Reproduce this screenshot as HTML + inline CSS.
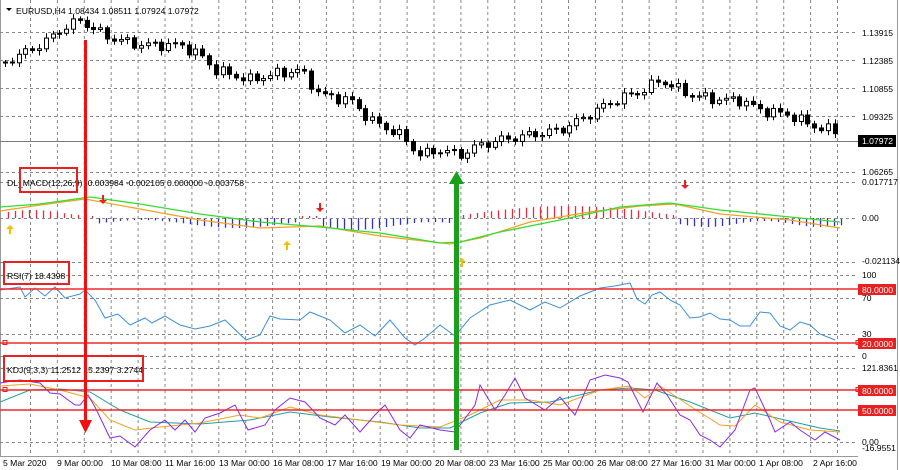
<!DOCTYPE html>
<html><head><meta charset="utf-8"><style>
html,body{margin:0;padding:0;background:#fff;width:900px;height:470px;overflow:hidden}
svg{display:block;font-family:"Liberation Sans",sans-serif}
text{font-size:8.6px;fill:#000}
</style></head><body>
<svg id="s" width="900" height="470" viewBox="0 0 900 470">
<rect width="900" height="470" fill="#fff"/>
<line x1="897.5" y1="0" x2="897.5" y2="470" stroke="#999"/>
<line x1="0.5" y1="0" x2="0.5" y2="456" stroke="#999"/>
<line x1="0" y1="456.5" x2="858" y2="456.5" stroke="#999"/>
<g id="grid" stroke="#888" stroke-dasharray="3,3" stroke-width="1"></g>
<line x1="0" y1="141.5" x2="858" y2="141.5" stroke="#778"/>
<g id="candles"></g>
<g id="hist"></g>
<line x1="0" y1="218.5" x2="858" y2="218.5" stroke="#888" stroke-dasharray="3,3"/>
<polyline fill="none" stroke="#f5a020" stroke-width="1.2" points="0,211 40,205 85,199 140,209 200,220 260,228 320,226 380,236 450,244 480,238 530,222 590,212 640,206 675,204 720,214 790,220 840,228"/>
<polyline fill="none" stroke="#33dd33" stroke-width="1.3" points="0,207 40,204 90,197 140,204 200,214 260,222 320,227 380,233 440,243 460,242 500,232 560,220 620,207 670,203 720,210 780,216 840,222"/>
<polyline fill="none" stroke="#3c8fd8" stroke-width="1" points="0,290 20,287 25,297 35,288 45,296 55,287 65,298 80,294 85,290 95,300 105,318 118,314 130,325 145,318 152,323 165,316 180,325 195,329 210,326 225,320 246,340 260,335 270,316 280,319 300,320 310,312 330,320 345,333 360,325 375,336 390,320 405,338 415,345 425,338 440,325 455,336 470,318 490,305 510,300 530,310 545,302 560,308 580,296 600,288 615,286 630,283 637,299 645,304 652,295 660,292 670,300 680,305 690,318 700,317 710,313 720,319 730,320 740,326 750,326 760,312 770,313 780,326 790,330 800,322 810,325 820,334 835,340"/>
<polyline fill="none" stroke="#20a0a0" stroke-width="1" points="0,402 30,390 60,389 90,392 120,410 150,422 200,424 250,420 290,412 330,417 380,422 420,428 450,428 480,413 510,403 550,402 600,390 630,388 655,390 690,402 730,418 755,413 785,420 820,428 840,431"/>
<polyline fill="none" stroke="#f5a020" stroke-width="1" points="0,386 30,384 60,390 90,398 110,420 135,430 160,427 200,423 240,415 260,418 290,407 320,415 360,420 400,425 440,427 470,415 500,400 530,400 560,405 600,390 630,386 645,398 660,386 690,406 720,425 735,426 755,405 780,422 810,430 840,432"/>
<polyline fill="none" stroke="#8a2be2" stroke-width="1" points="0,383 20,380 40,383 50,393 60,394 75,405 80,405 88,395 95,407 110,438 120,436 135,447 150,430 165,420 175,430 185,420 195,432 205,418 220,413 235,405 248,430 265,425 275,410 290,398 305,402 320,418 335,425 345,415 360,432 375,415 385,405 400,430 410,438 420,425 440,430 455,432 475,405 480,385 495,410 505,395 515,378 525,398 545,410 560,397 575,415 590,380 605,375 620,378 628,382 643,412 657,383 667,395 680,415 690,420 700,435 710,440 720,447 735,430 750,390 755,388 770,420 775,432 790,422 800,430 815,440 825,432 840,440"/>
<g stroke="#f02828" stroke-width="1.5">
<line x1="0" y1="289" x2="858" y2="289"/><line x1="0" y1="343" x2="858" y2="343"/>
<line x1="0" y1="390" x2="858" y2="390"/><line x1="0" y1="410" x2="858" y2="410"/>
</g>
<g fill="#e82020">
<rect x="858" y="284" width="38" height="11"/><rect x="858" y="338" width="38" height="11"/>
<rect x="858" y="385" width="38" height="11"/><rect x="858" y="405" width="38" height="11"/>
</g>
<g fill="none" stroke="#e82020"><rect x="3" y="340.5" width="4" height="4"/><rect x="3" y="387.5" width="4" height="4"/><rect x="856" y="340.5" width="4" height="4"/><rect x="856" y="387.5" width="4" height="4"/></g>
<g><text x="862" y="293" style="fill:#fff">80.0000</text><text x="862" y="347" style="fill:#fff">20.0000</text><text x="862" y="394" style="fill:#fff">80.0000</text><text x="862" y="414" style="fill:#fff">50.0000</text></g>
<rect x="858" y="135" width="38" height="12" fill="#000"/>
<text x="862" y="144" style="fill:#fff">1.07972</text>
<text x="862" y="36">1.13915</text><text x="862" y="64">1.12385</text><text x="862" y="92">1.10855</text><text x="862" y="120">1.09325</text><text x="862" y="175">1.06265</text>
<text x="862" y="185">0.017717</text><text x="862" y="221">0.00</text><text x="862" y="264">-0.021134</text>
<text x="862" y="278">100</text><text x="862" y="301">70</text><text x="862" y="337">30</text><text x="862" y="359">0</text>
<text x="862" y="371">121.8361</text><text x="862" y="445">0.00</text><text x="862" y="451">-16.9551</text>
<g><text x="3" y="466">5 Mar 2020</text><text x="57" y="466">9 Mar 00:00</text><text x="111" y="466">10 Mar 08:00</text><text x="165" y="466">11 Mar 16:00</text><text x="219" y="466">13 Mar 00:00</text><text x="273" y="466">16 Mar 08:00</text><text x="327" y="466">17 Mar 16:00</text><text x="381" y="466">19 Mar 00:00</text><text x="435" y="466">20 Mar 08:00</text><text x="489" y="466">23 Mar 16:00</text><text x="543" y="466">25 Mar 00:00</text><text x="597" y="466">26 Mar 08:00</text><text x="651" y="466">27 Mar 16:00</text><text x="705" y="466">31 Mar 00:00</text><text x="759" y="466">1 Apr 08:00</text><text x="813" y="466">2 Apr 16:00</text></g>
<path d="M6,8 L12,8 L9,11Z" fill="#000"/>
<text x="16" y="14">EURUSD,H4  1.08434 1.08511 1.07924 1.07972</text>
<text x="7" y="186">DL_MACD(12,26,9) -0.003984 -0.002105 0.000000 -0.003758</text>
<text x="7" y="279">RSI(7) 18.4398</text>
<text x="7" y="373">KDJ(9,3,3) 11.2512 15.2397 3.2744</text>
<g fill="none" stroke="#e82020" stroke-width="2">
<rect x="20" y="168" width="57" height="24"/><rect x="4" y="262" width="65" height="22"/><rect x="4" y="356" width="139" height="25"/>
</g>
<g fill="#f0c000"><path d="M10,225 l-4,4 h3 v5 h2 v-5 h3z"/><path d="M287,241 l-4,4 h3 v5 h2 v-5 h3z"/><path d="M462,258 l-4,4 h3 v5 h2 v-5 h3z"/></g>
<g fill="#e82020"><path d="M103,204 l-4,-4 h3 v-5 h2 v5 h3z"/><path d="M320,212 l-4,-4 h3 v-5 h2 v5 h3z"/><path d="M685,189 l-4,-4 h3 v-5 h2 v5 h3z"/></g>
<rect x="84" y="40" width="3" height="382" fill="#f01010"/>
<path d="M79,420 L92,420 L85.5,433Z" fill="#f01010"/>
<rect x="454" y="182" width="5" height="268" fill="#1aa01a"/>
<path d="M449,184 L464,184 L456.5,171Z" fill="#1aa01a"/>
</svg>
<script>
(function(){
var NS="http://www.w3.org/2000/svg";
function el(p,t,a){var e=document.createElementNS(NS,t);for(var k in a)e.setAttribute(k,a[k]);document.getElementById(p).appendChild(e);return e;}
[32.5,60.5,88.5,116.5,172.5,182.5,262.5,275.5,298.5,334.5,356.5,368.5,442.5].forEach(function(y){el("grid","line",{x1:0,y1:y,x2:858,y2:y});});
for(var gx=30.5;gx<858;gx+=26.9){el("grid","line",{x1:gx,y1:0,x2:gx,y2:456});}
var A=[[5,62],[30,50],[45,42],[60,30],[80,20],[95,30],[110,38],[140,45],[180,45],[200,55],[215,70],[250,80],[270,75],[300,70],[320,95],[350,100],[370,120],[400,135],[420,155],[440,150],[460,155],[480,145],[500,140],[530,135],[560,130],[580,120],[600,108],[620,98],[640,92],[660,80],[690,95],[720,100],[740,100],[760,110],[790,115],[810,125],[840,133]];
function interp(x){for(var i=0;i<A.length-1;i++){if(x<=A[i+1][0]){var t=(x-A[i][0])/(A[i+1][0]-A[i][0]);return A[i][1]+t*(A[i+1][1]-A[i][1]);}}return A[A.length-1][1];}
var prev=62;
for(var x=5,i=0;x<=841;x+=6.8,i++){
 var c=interp(x)+4*Math.sin(i*1.7)+2*Math.sin(i*3.1);
 var o=prev;var bt=Math.min(o,c),bb=Math.max(o,c);
 var hi=bt-2-3*Math.abs(Math.sin(i*2.3)),lo=bb+2+3*Math.abs(Math.cos(i*1.9));
 var cx=Math.round(x)+0.5;
 el("candles","line",{x1:cx,y1:hi,x2:cx,y2:lo,stroke:"#000"});
 var h=Math.max(1,bb-bt);
 el("candles","rect",{x:cx-2,y:bt,width:4,height:h,fill:(c<o?"#fff":"#000"),stroke:"#000","stroke-width":1});
 prev=c;
}
function hv(x){if(x<98)return 5+3*Math.sin(x/20);if(x<300)return -(6+4*Math.sin(x/30));if(x<320)return 2;if(x<455)return -(8+4*Math.sin(x/25));if(x<680)return 10*Math.sin((x-455)/225*Math.PI)+2;return -(6+3*Math.sin(x/18));}
for(var hx=8;hx<842;hx+=7){var v=hv(hx);var px=Math.round(hx)+0.5;el("hist","line",{x1:px,y1:218,x2:px,y2:218-v,stroke:(v>0?"#e03040":"#3030d0"),"stroke-width":1.3});}
})();
</script>
</body></html>
